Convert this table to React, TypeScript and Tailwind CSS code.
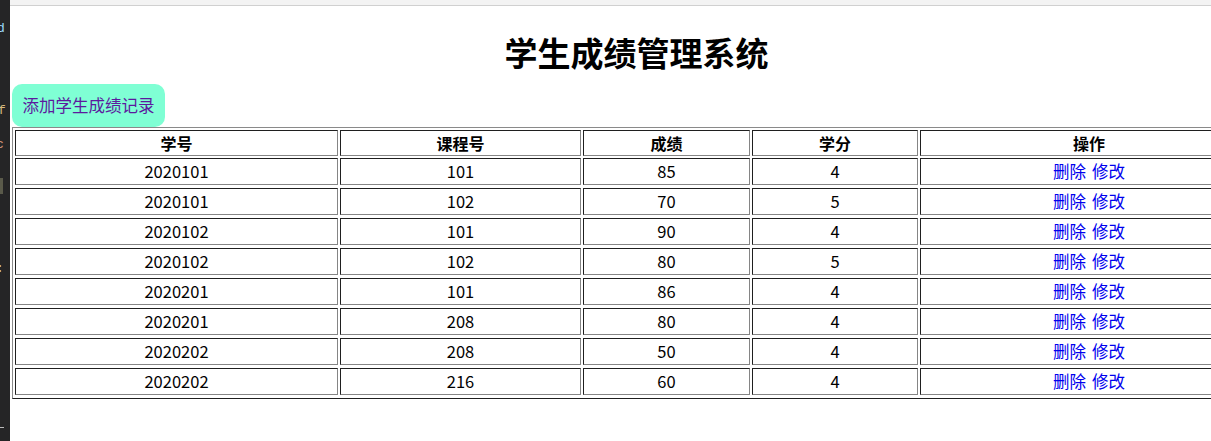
import React from "react";

const rows = [
  ["2020101", "101", "85", "4"],
  ["2020101", "102", "70", "5"],
  ["2020102", "101", "90", "4"],
  ["2020102", "102", "80", "5"],
  ["2020201", "101", "86", "4"],
  ["2020201", "208", "80", "4"],
  ["2020202", "208", "50", "4"],
  ["2020202", "216", "60", "4"],
];

const cell =
  "border border-t-[#1f1f1f] border-l-[#1f1f1f] border-b-[#858585] border-r-[#858585] flex items-center justify-center";

export default function App() {
  return (
    <div
      className="w-[1211px] h-[441px] overflow-hidden bg-white flex"
      style={{ fontFamily: '"Noto Sans CJK SC", "Noto Sans", sans-serif' }}
    >
      <div className="relative w-[10px] shrink-0 bg-[#252526] overflow-hidden text-[13px] leading-none font-mono">
        <span className="absolute left-[-3px] top-[22px] text-[#9cdcfe]">d</span>
        <span className="absolute left-[-2px] top-[104px] text-[#d7ba7d]">f</span>
        <span className="absolute left-[-4px] top-[138px] text-[#ce9178]">c</span>
        <div className="absolute left-0 top-[178px] w-[3px] h-[16px] bg-[#5a5a4a]" />
        <span className="absolute left-[-4px] top-[262px] text-[#d4d4d4]">:</span>
        <span className="absolute left-[-6px] top-[341px] text-[#d7ba7d]">]</span>
        <div className="absolute left-0 top-[427px] w-[4px] h-[1px] bg-[#bbbbbb]" />
      </div>
      <div className="flex-1 flex flex-col min-w-0">
        <div className="h-[6px] shrink-0 bg-[#f3f3f3] border-b border-[#d0d0d0]" />
        <div className="w-[1251px] pl-[2px] flex flex-col">
          <h1 className="mt-[26px] h-[40px] flex items-center justify-center text-[33px] font-bold text-black leading-none">
            学生成绩管理系统
          </h1>
          <div className="mt-[12px] flex">
            <button className="h-[43px] w-[153px] rounded-[10px] bg-[#7fffd4] text-[#5c1a9e] text-[16.5px] flex items-center justify-center">
              添加学生成绩记录
            </button>
          </div>
          <div className="w-[1249px] border border-t-[#8a8a8a] border-l-[#8a8a8a] border-b-[#1f1f1f] border-r-[#1f1f1f] px-[2px] pt-[2px] pb-[4px] flex flex-col text-[16px] text-black">
            <div className="grid grid-cols-[323px_241px_167px_166px_338px] gap-x-[2px] h-[26px] font-bold">
              <div className={cell}>学号</div>
              <div className={cell}>课程号</div>
              <div className={cell}>成绩</div>
              <div className={cell}>学分</div>
              <div className={cell}>操作</div>
            </div>
            <div className="mt-[2px] flex flex-col gap-y-[4px]">
              {rows.map((r, i) => (
                <div
                  key={i}
                  className="grid grid-cols-[323px_241px_167px_166px_338px] gap-x-[2px] h-[26px] text-[16.5px]"
                >
                  <div className={cell}>{r[0]}</div>
                  <div className={cell}>{r[1]}</div>
                  <div className={cell}>{r[2]}</div>
                  <div className={cell}>{r[3]}</div>
                  <div className={cell + " text-[#0000ee] gap-[6px]"}>
                    <a className="cursor-pointer">删除</a>
                    <a className="cursor-pointer">修改</a>
                  </div>
                </div>
              ))}
            </div>
          </div>
        </div>
      </div>
    </div>
  );
}
